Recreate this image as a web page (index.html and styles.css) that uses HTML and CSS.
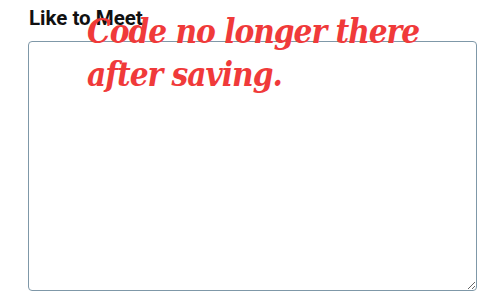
FILE: index.html
```html
<!DOCTYPE html>
<html lang="en">
<head>
    <meta charset="UTF-8">
    <meta name="viewport" content="width=device-width, initial-scale=1.0">
    <title>Like to Meet</title>
    <link rel="stylesheet" href="styles.css">
</head>
<body>
    <div class="field">
        <label for="meet" class="label">Like to Meet</label>
        <textarea id="meet" class="box"></textarea>
        <p class="note">Code no longer there<br>after saving.</p>
    </div>
</body>
</html>
```

FILE: styles.css
```css
*{
    box-sizing: border-box;
    margin: 0;
}
body{
    background: #fff;
    font-family: Roboto, "Liberation Sans", sans-serif;
}
.field{
    position: relative;
    display: flex;
    flex-direction: column;
    padding: 6px 0 0 28px;
}
.label{
    font-size: 20.5px;
    font-weight: 700;
    color: #111;
    line-height: 24px;
    padding-left: 1px;
    margin-bottom: 11px;
}
.box{
    width: 449px;
    height: 250px;
    border: 1.5px solid #7f98a8;
    border-radius: 4px;
    background: #fff;
    outline: none;
}
.note{
    position: absolute;
    left: 87px;
    top: 10px;
    font-family: "DejaVu Serif Condensed", "DejaVu Serif", serif;
    font-stretch: condensed;
    font-style: italic;
    font-weight: 700;
    font-size: 33px;
    line-height: 43px;
    letter-spacing: -1px;
    color: #f03a3a;
}
```
